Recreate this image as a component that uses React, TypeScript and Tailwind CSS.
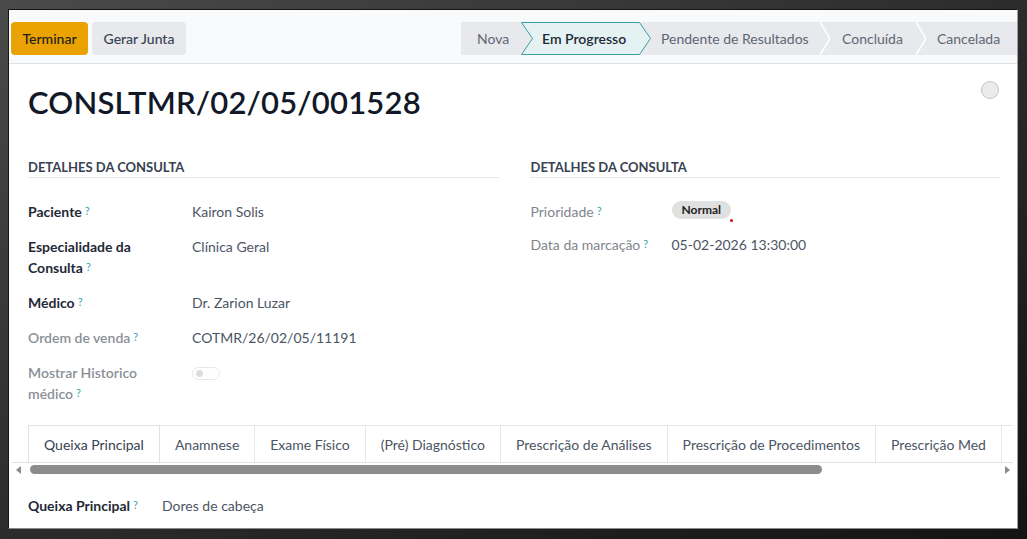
import React from "react";

function Q() {
  return <sup className="ml-[3px] text-[11px] font-normal text-[#3b9fb0] relative -top-[2px]">?</sup>;
}

function Sep() {
  return (
    <svg width="10" height="33" viewBox="0 0 10 33" className="shrink-0">
      <polyline points="0,0 10,16.5 0,33" fill="none" stroke="#ffffff" strokeWidth="1.5" />
    </svg>
  );
}

export default function App() {
  const tabs = [
    "Queixa Principal",
    "Anamnese",
    "Exame Físico",
    "(Pré) Diagnóstico",
    "Prescrição de Análises",
    "Prescrição de Procedimentos",
    "Prescrição Med",
  ];
  return (
    <div className="w-[1027px] h-[539px] bg-linear-to-br from-[#4a4a4a] via-[#2c2c2c] to-[#141414] pt-[9px] pl-[8px] pr-[9px] pb-[10px] font-['Lato',sans-serif]">
      <div className="h-full bg-white border-l border-t border-[#151515] border-r border-b border-r-[#a0a0a0] border-b-[#8a8a8a] flex flex-col overflow-hidden">
        {/* control panel */}
        <div className="h-[54px] shrink-0 bg-[#f9fafb] border-b border-[#dfe2e6] flex items-start justify-between pt-[12px]">
          <div className="flex gap-[4px] pl-[2px]">
            <button className="h-[33px] w-[77px] rounded-[4px] bg-[#eaa203] text-[14px] font-medium text-[#1d1d1d]">Terminar</button>
            <button className="h-[33px] w-[94px] rounded-[4px] bg-[#e7e9ed] text-[14px] font-medium text-[#374151]">Gerar Junta</button>
          </div>
          <div className="flex h-[33px] bg-[#e7e9ed] w-[556px] items-center text-[14px] text-[#5f6672]">
            <div className="w-[60px] pl-[16px]">Nova</div>
            <div className="relative w-[140px] h-[33px] flex items-center">
              <svg width="131" height="33" viewBox="0 0 131 33" className="absolute left-0 top-0">
                <polygon points="0.5,0.5 118.5,0.5 129.5,16.5 118.5,32.5 0.5,32.5 11.5,16.5" fill="#e5f2f3" stroke="#3a9ea3" strokeWidth="1" />
              </svg>
              <span className="relative pl-[21px] font-semibold text-[#1f2937]">Em Progresso</span>
            </div>
            <div className="w-[159px]">Pendente de Resultados</div>
            <Sep />
            <div className="w-[86px] pl-[12px]">Concluída</div>
            <Sep />
            <div className="pl-[11px]">Cancelada</div>
          </div>
        </div>

        {/* sheet */}
        <div className="flex-1 flex flex-col px-[19px] pr-[17px]">
          <div className="flex justify-between items-start pt-[18px]">
            <h1 className="text-[31px] leading-[40px] font-semibold text-[#111827] tracking-[0.2px]">CONSLTMR/02/05/001528</h1>
            <div className="mt-[-1px] mr-[1px] w-[18px] h-[18px] rounded-full bg-[#ebebeb] border border-[#c4c4c4]" />
          </div>

          <div className="grid grid-cols-2 gap-x-[31px] mt-[35px] text-[14px]">
            <div>
              <div className="text-[13px] leading-[20px] font-bold uppercase text-[#374151] border-b border-[#e5e7eb]">Detalhes da Consulta</div>
              <div className="mt-[16px]">
                <div className="flex py-[7px] leading-[21px]">
                  <div className="w-[164px] font-bold text-[#1f2937]">Paciente<Q /></div>
                  <div className="text-[#4b5563]">Kairon Solis</div>
                </div>
                <div className="flex py-[7px] leading-[21px]">
                  <div className="w-[164px] font-bold text-[#1f2937]">Especialidade da<br />Consulta<Q /></div>
                  <div className="text-[#4b5563]">Clínica Geral</div>
                </div>
                <div className="flex py-[7px] leading-[21px]">
                  <div className="w-[164px] font-bold text-[#1f2937]">Médico<Q /></div>
                  <div className="text-[#4b5563]">Dr. Zarion Luzar</div>
                </div>
                <div className="flex py-[7px] leading-[21px]">
                  <div className="w-[164px] font-semibold text-[#8a8f97]">Ordem de venda<Q /></div>
                  <div className="text-[#4b5563]">COTMR/26/02/05/11191</div>
                </div>
                <div className="flex py-[7px] leading-[21px]">
                  <div className="w-[164px] font-semibold text-[#8a8f97]">Mostrar Historico<br />médico<Q /></div>
                  <div className="pt-[5px]">
                    <div className="w-[28px] h-[13px] rounded-full border border-[#e6e7ea] bg-white flex items-center pl-[3px]">
                      <div className="w-[7px] h-[7px] rounded-full bg-[#dcdde0]" />
                    </div>
                  </div>
                </div>
              </div>
            </div>
            <div>
              <div className="pl-[1px] text-[13px] leading-[20px] font-bold uppercase text-[#374151] border-b border-[#e5e7eb]">Detalhes da Consulta</div>
              <div className="mt-[17px] pl-[1px]">
                <div className="flex py-[6px] leading-[21px]">
                  <div className="w-[141px] text-[#80858d]">Prioridade<Q /></div>
                  <div className="relative">
                    <span className="relative -top-[3px] inline-flex items-center h-[18px] px-[10px] rounded-full bg-[#e0e0e0] text-[12px] font-bold text-[#222]">Normal</span>
                    <span className="absolute left-[58px] top-[18px] w-[3px] h-[3px] rounded-full bg-[#d01010]" />
                  </div>
                </div>
                <div className="flex py-[6px] leading-[21px]">
                  <div className="w-[141px] text-[#80858d]">Data da marcação<Q /></div>
                  <div className="text-[#4b5563]">05-02-2026 13:30:00</div>
                </div>
              </div>
            </div>
          </div>

          {/* tabs */}
          <div className="mt-[14px] -ml-[16px] -mr-[13px]">
            <div className="flex overflow-hidden pl-[16px] border-b border-[#dee2e6]">
              {tabs.map((t, i) => (
                <div
                  key={t}
                  className={
                    i === 0
                      ? "shrink-0 h-[38px] px-[15px] flex items-center text-[14px] text-[#374151] border border-[#dee2e6] border-b-white -mb-[1px] bg-white whitespace-nowrap"
                      : "shrink-0 h-[37px] px-[15px] flex items-center text-[14px] text-[#4b5563] border-t border-r border-[#e6e8eb] whitespace-nowrap"
                  }
                >
                  {t}
                </div>
              ))}
              <div className="flex-1 h-[37px] border-t border-[#e6e8eb]" />
            </div>
            <div className="h-[13px] flex items-center pl-[4px] pr-[3px]">
              <svg width="6" height="8" viewBox="0 0 6 8"><polygon points="5,0 5,8 0,4" fill="#8a8a8a" /></svg>
              <div className="flex-1 mx-[6px] flex items-center">
                <div className="ml-[2px] h-[9px] w-[792px] rounded-full bg-[#8c8c8c]" />
              </div>
              <svg width="6" height="8" viewBox="0 0 6 8"><polygon points="1,0 1,8 6,4" fill="#8a8a8a" /></svg>
            </div>
          </div>

          <div className="flex mt-[19px] leading-[21px] text-[14px]">
            <div className="w-[134px] font-bold text-[#1f2937]">Queixa Principal<Q /></div>
            <div className="text-[#4b5563]">Dores de cabeça</div>
          </div>
        </div>
      </div>
    </div>
  );
}
